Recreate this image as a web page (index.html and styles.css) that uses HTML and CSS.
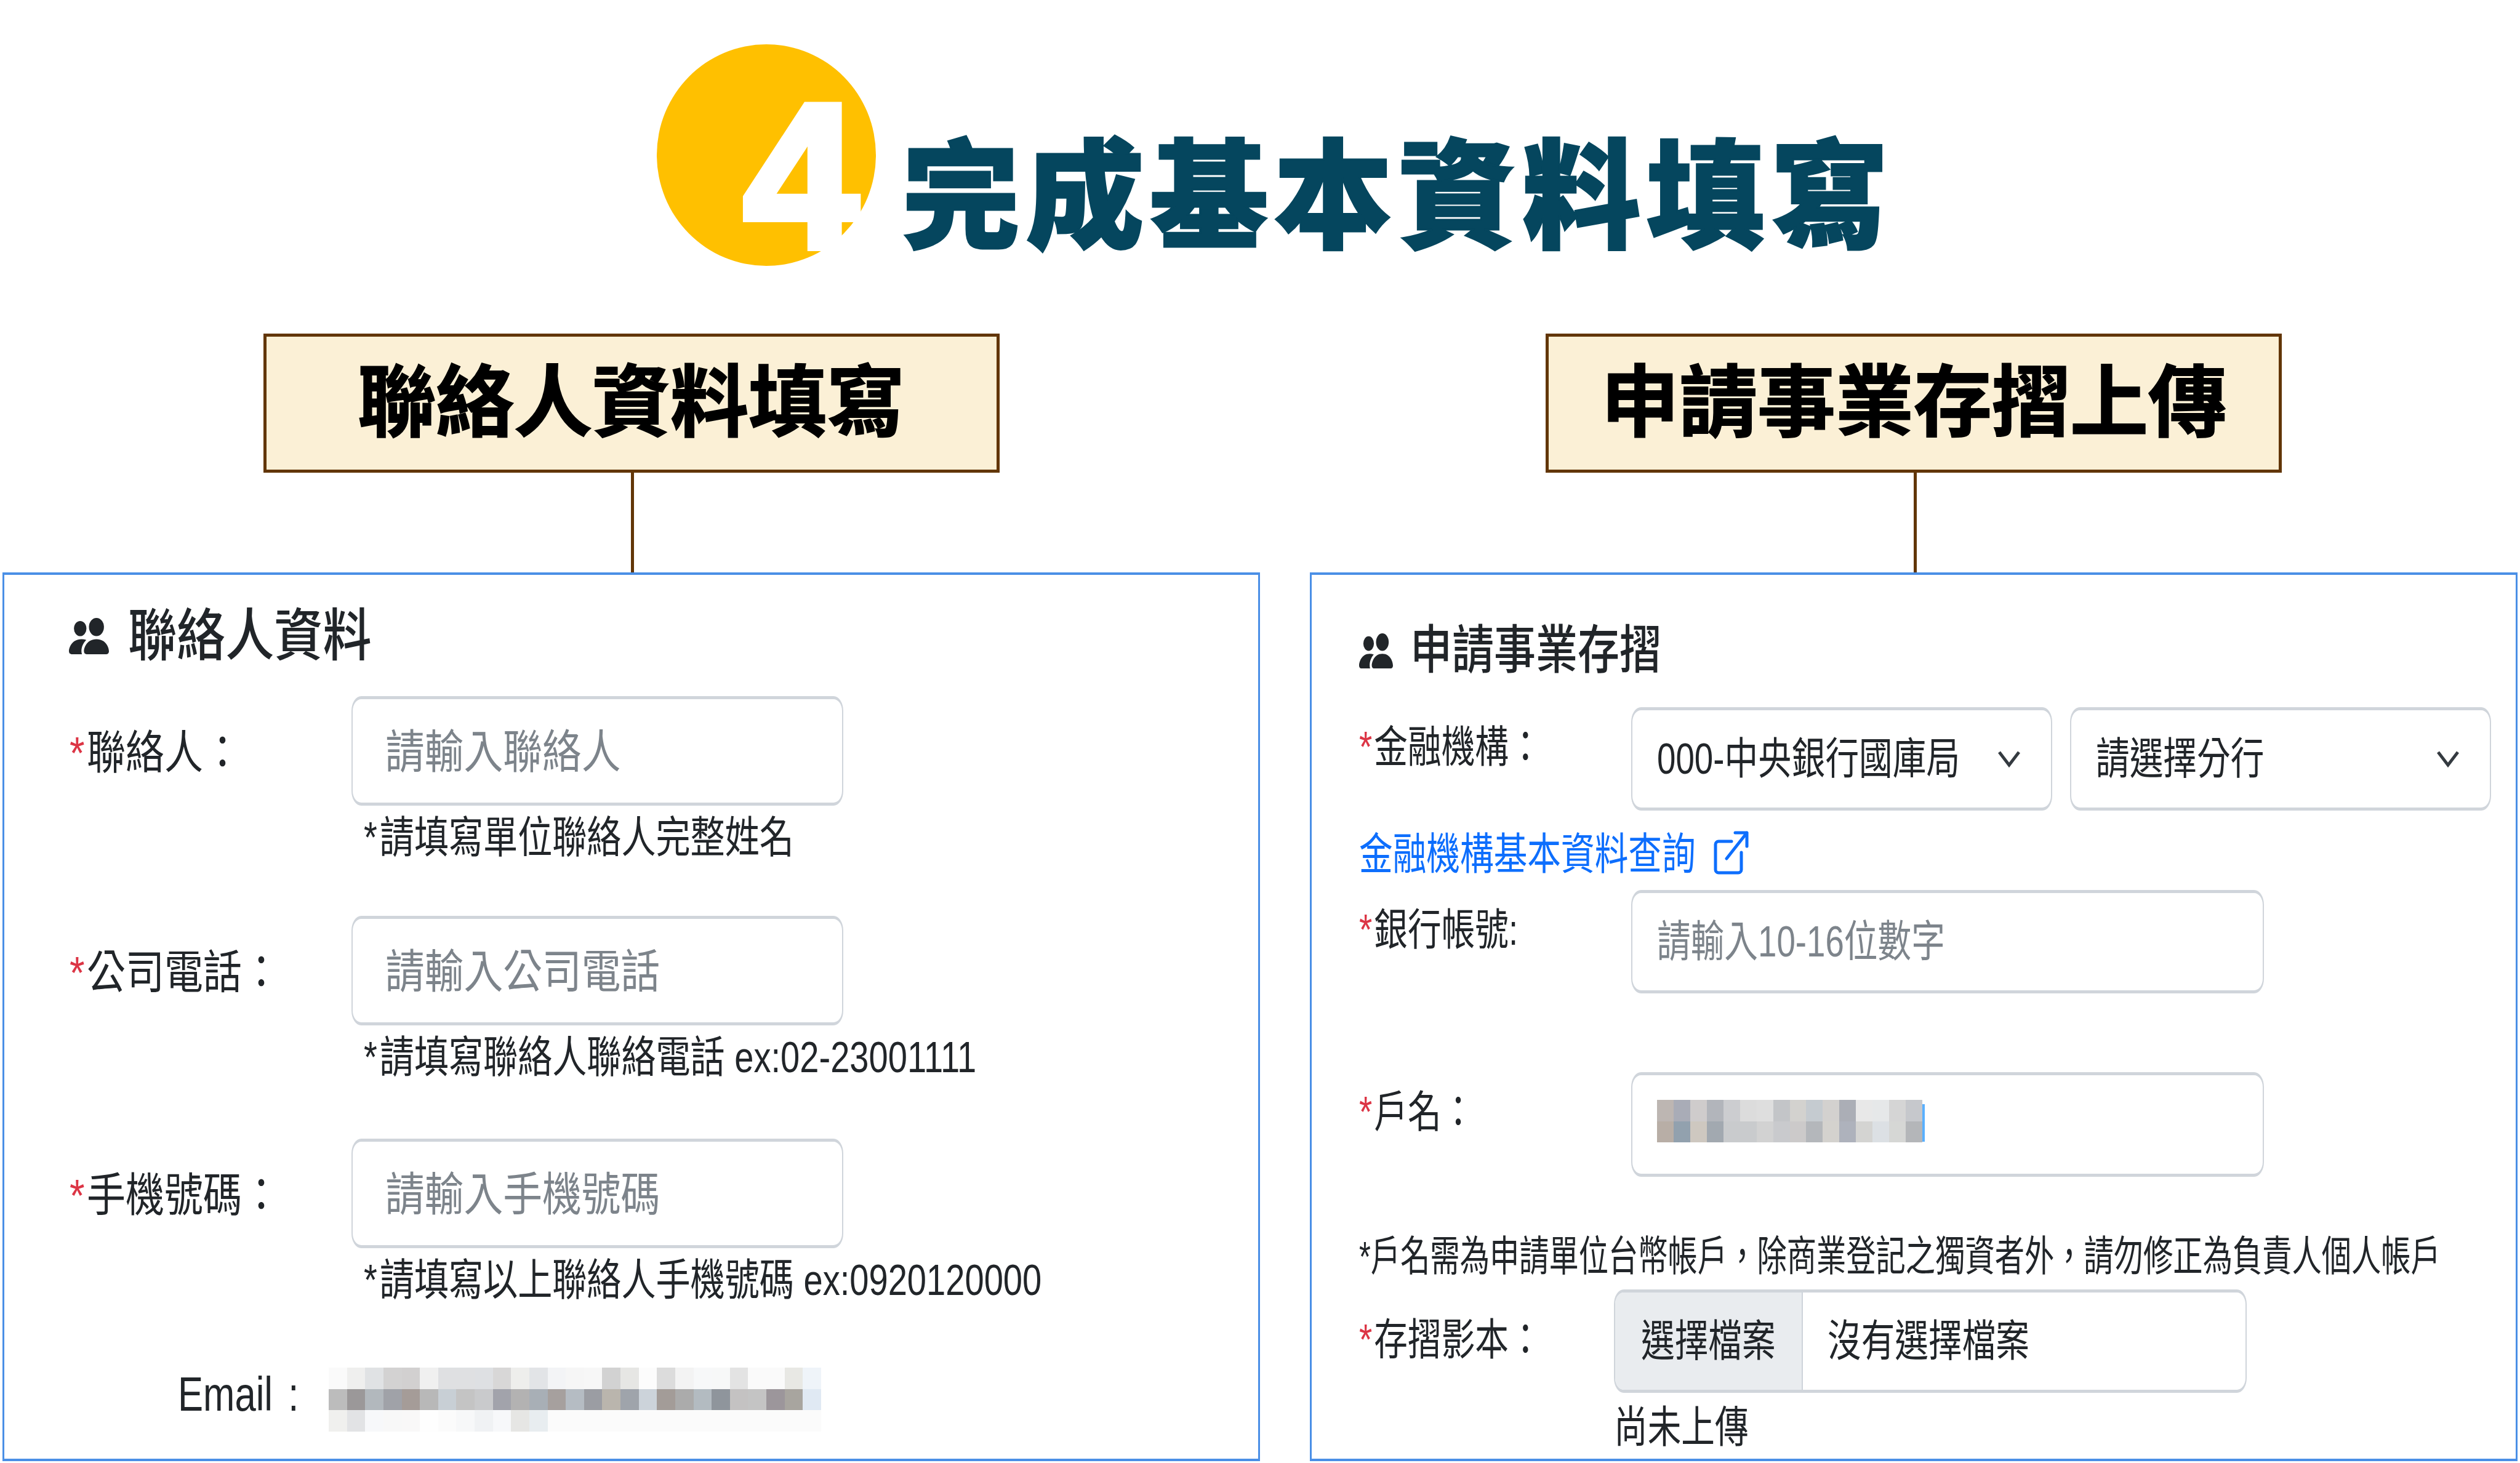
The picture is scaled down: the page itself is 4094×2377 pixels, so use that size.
FILE: index.html
```html
<!DOCTYPE html>
<html lang="zh-Hant">
<head>
<meta charset="utf-8">
<title>完成基本資料填寫</title>
<link rel="stylesheet" href="styles.css">
</head>
<body>
<main class="page">
  <header class="hero">
    <div class="step"><span class="step-num">4</span></div>
    <h1 class="hero-title">完成基本資料填寫</h1>
  </header>
  <div class="columns">
    <section class="col">
      <div class="callout"><h2>聯絡人資料填寫</h2></div>
      <div class="connector"></div>
      <div class="panel panel-left">
        <div class="panel-head">
          <svg class="icon-people-l" viewBox="0 2 16 12" preserveAspectRatio="none"><path d="M7 14s-1 0-1-1 1-4 5-4 5 3 5 4-1 1-1 1H7Zm4-6a3 3 0 1 0 0-6 3 3 0 0 0 0 6Zm-5.784 6A2.238 2.238 0 0 1 5 13c0-1.355.68-2.75 1.936-3.72A6.325 6.325 0 0 0 5 9c-4 0-5 3-5 4s1 1 1 1h4.216ZM4.5 8a2.5 2.5 0 1 0 0-5 2.5 2.5 0 0 0 0 5Z"/></svg>
          <span class="t head-l">聯絡人資料</span>
        </div>
        <div class="lrow lrow-1">
          <div class="llabel"><span class="t l-lab"><span class="req">*</span>聯絡人：</span></div>
          <div>
            <div class="field lfield"><span class="t l-ph">請輸入聯絡人</span></div>
            <div class="help"><span class="t l-help"><span class="star">*</span>請填寫單位聯絡人完整姓名</span></div>
          </div>
        </div>
        <div class="lrow lrow-2">
          <div class="llabel"><span class="t l-lab"><span class="req">*</span>公司電話：</span></div>
          <div>
            <div class="field lfield"><span class="t l-ph">請輸入公司電話</span></div>
            <div class="help"><span class="t l-help"><span class="star">*</span>請填寫聯絡人聯絡電話 ex:02-23001111</span></div>
          </div>
        </div>
        <div class="lrow lrow-3">
          <div class="llabel"><span class="t l-lab"><span class="req">*</span>手機號碼：</span></div>
          <div>
            <div class="field lfield"><span class="t l-ph">請輸入手機號碼</span></div>
            <div class="help"><span class="t l-help"><span class="star">*</span>請填寫以上聯絡人手機號碼 ex:0920120000</span></div>
          </div>
        </div>
        <div class="email-row">
          <div class="email-label"><span class="t l-email">Email :</span></div>
          <svg class="mosaic-email" viewBox="0 0 27 3" preserveAspectRatio="none" shape-rendering="crispEdges">
            <rect x="0" y="0" width="1" height="1" fill="#fafafa"/><rect x="1" y="0" width="1" height="1" fill="#efefee"/><rect x="2" y="0" width="1" height="1" fill="#e0e2e4"/><rect x="3" y="0" width="1" height="1" fill="#d3d2d2"/><rect x="4" y="0" width="1" height="1" fill="#d2d0d0"/><rect x="5" y="0" width="1" height="1" fill="#f0f0f0"/><rect x="6" y="0" width="1" height="1" fill="#dfe0e2"/><rect x="7" y="0" width="1" height="1" fill="#dfe0e2"/><rect x="8" y="0" width="1" height="1" fill="#dee0e3"/><rect x="9" y="0" width="1" height="1" fill="#d8d7d7"/><rect x="10" y="0" width="1" height="1" fill="#eeeeec"/><rect x="11" y="0" width="1" height="1" fill="#e2e4e7"/><rect x="12" y="0" width="1" height="1" fill="#f3f4f6"/><rect x="13" y="0" width="1" height="1" fill="#f6f6f6"/><rect x="14" y="0" width="1" height="1" fill="#f7f7f7"/><rect x="15" y="0" width="1" height="1" fill="#d2d2d2"/><rect x="16" y="0" width="1" height="1" fill="#e6e6e4"/><rect x="17" y="0" width="1" height="1" fill="#fcfcfc"/><rect x="18" y="0" width="1" height="1" fill="#dcdcdc"/><rect x="19" y="0" width="1" height="1" fill="#f3f3f3"/><rect x="20" y="0" width="1" height="1" fill="#f7f8f9"/><rect x="21" y="0" width="1" height="1" fill="#f7f8f8"/><rect x="22" y="0" width="1" height="1" fill="#e3e3e3"/><rect x="23" y="0" width="1" height="1" fill="#fafafa"/><rect x="24" y="0" width="1" height="1" fill="#fafafa"/><rect x="25" y="0" width="1" height="1" fill="#e8e8e4"/><rect x="26" y="0" width="1" height="1" fill="#eff4f9"/>
            <rect x="0" y="1" width="1" height="1" fill="#bcbcbc"/><rect x="1" y="1" width="1" height="1" fill="#9b9899"/><rect x="2" y="1" width="1" height="1" fill="#b2b8bd"/><rect x="3" y="1" width="1" height="1" fill="#a0a2a8"/><rect x="4" y="1" width="1" height="1" fill="#a59c98"/><rect x="5" y="1" width="1" height="1" fill="#b8b8b8"/><rect x="6" y="1" width="1" height="1" fill="#c8cfd5"/><rect x="7" y="1" width="1" height="1" fill="#c4c4c4"/><rect x="8" y="1" width="1" height="1" fill="#c9cacc"/><rect x="9" y="1" width="1" height="1" fill="#a2a3ab"/><rect x="10" y="1" width="1" height="1" fill="#b3b2b2"/><rect x="11" y="1" width="1" height="1" fill="#a8afb6"/><rect x="12" y="1" width="1" height="1" fill="#a6a09e"/><rect x="13" y="1" width="1" height="1" fill="#b5bcc3"/><rect x="14" y="1" width="1" height="1" fill="#9b9da3"/><rect x="15" y="1" width="1" height="1" fill="#bab5ad"/><rect x="16" y="1" width="1" height="1" fill="#9fa4ab"/><rect x="17" y="1" width="1" height="1" fill="#ccd3da"/><rect x="18" y="1" width="1" height="1" fill="#a39c98"/><rect x="19" y="1" width="1" height="1" fill="#ababab"/><rect x="20" y="1" width="1" height="1" fill="#b3bbc1"/><rect x="21" y="1" width="1" height="1" fill="#8f959c"/><rect x="22" y="1" width="1" height="1" fill="#c4c2c2"/><rect x="23" y="1" width="1" height="1" fill="#c4c4c4"/><rect x="24" y="1" width="1" height="1" fill="#9c969b"/><rect x="25" y="1" width="1" height="1" fill="#a8a59f"/><rect x="26" y="1" width="1" height="1" fill="#e0e9f3"/>
            <rect x="0" y="2" width="1" height="1" fill="#f0f0ee"/><rect x="1" y="2" width="1" height="1" fill="#e2e3e5"/><rect x="2" y="2" width="1" height="1" fill="#f7f8fa"/><rect x="3" y="2" width="1" height="1" fill="#f8f8f8"/><rect x="4" y="2" width="1" height="1" fill="#f9f8f8"/><rect x="5" y="2" width="1" height="1" fill="#fefefe"/><rect x="6" y="2" width="1" height="1" fill="#fbfbfb"/><rect x="7" y="2" width="1" height="1" fill="#f7f8f9"/><rect x="8" y="2" width="1" height="1" fill="#f0f2f4"/><rect x="9" y="2" width="1" height="1" fill="#f7f8fa"/><rect x="10" y="2" width="1" height="1" fill="#e6e6e4"/><rect x="11" y="2" width="1" height="1" fill="#e8edf0"/><rect x="12" y="2" width="15" height="1" fill="#fbfbfb"/>
          </svg>
        </div>
      </div>
    </section>
    <section class="col">
      <div class="callout"><h2>申請事業存摺上傳</h2></div>
      <div class="connector"></div>
      <div class="panel panel-right">
        <div class="panel-head head-r-row">
          <svg class="icon-people-r" viewBox="0 2 16 12" preserveAspectRatio="none"><path d="M7 14s-1 0-1-1 1-4 5-4 5 3 5 4-1 1-1 1H7Zm4-6a3 3 0 1 0 0-6 3 3 0 0 0 0 6Zm-5.784 6A2.238 2.238 0 0 1 5 13c0-1.355.68-2.75 1.936-3.72A6.325 6.325 0 0 0 5 9c-4 0-5 3-5 4s1 1 1 1h4.216ZM4.5 8a2.5 2.5 0 1 0 0-5 2.5 2.5 0 0 0 0 5Z"/></svg>
          <span class="t head-r">申請事業存摺</span>
        </div>
        <div class="rrow rrow-bank">
          <div class="rlabel"><span class="t r-txt"><span class="req">*</span>金融機構：</span></div>
          <div class="selects">
            <div class="field sel"><span class="t r-txt">000-中央銀行國庫局</span><svg class="chev" viewBox="0 0 38 28"><path d="M3 3L19 24L35 3"/></svg></div>
            <div class="field sel"><span class="t r-txt">請選擇分行</span><svg class="chev" viewBox="0 0 38 28"><path d="M3 3L19 24L35 3"/></svg></div>
          </div>
        </div>
        <a class="lookup"><span class="t lookup-txt">金融機構基本資料查詢</span><svg class="icon-ext" viewBox="0 0 90 90"><path d="M43 27H22a5 5 0 0 0-5 5v41a5 5 0 0 0 5 5h32a5 5 0 0 0 5-5V45M35 55L68 13M49 13H68V35"/></svg></a>
        <div class="rrow rrow-acct">
          <div class="rlabel"><span class="t r-txt"><span class="req">*</span>銀行帳號:</span></div>
          <div class="field rfield"><span class="t r-ph">請輸入10-16位數字</span></div>
        </div>
        <div class="rrow rrow-name">
          <div class="rlabel"><span class="t r-txt"><span class="req">*</span>戶名：</span></div>
          <div class="field rfield name-field">
            <svg class="mosaic-name" viewBox="0 0 16 2" preserveAspectRatio="none" shape-rendering="crispEdges">
              <rect x="0" y="0" width="1" height="1" fill="#bdb6b2"/><rect x="1" y="0" width="1" height="1" fill="#a9acb7"/><rect x="2" y="0" width="1" height="1" fill="#cfcccc"/><rect x="3" y="0" width="1" height="1" fill="#b2b5bb"/><rect x="4" y="0" width="1" height="1" fill="#cccdd0"/><rect x="5" y="0" width="1" height="1" fill="#dcdcdc"/><rect x="6" y="0" width="1" height="1" fill="#dedede"/><rect x="7" y="0" width="1" height="1" fill="#c3c5c8"/><rect x="8" y="0" width="1" height="1" fill="#d3d2cf"/><rect x="9" y="0" width="1" height="1" fill="#c5cbd0"/><rect x="10" y="0" width="1" height="1" fill="#d3d1cf"/><rect x="11" y="0" width="1" height="1" fill="#abaeb6"/><rect x="12" y="0" width="1" height="1" fill="#e8e8e8"/><rect x="13" y="0" width="1" height="1" fill="#e6e8e9"/><rect x="14" y="0" width="1" height="1" fill="#d5d5d5"/><rect x="15" y="0" width="1" height="1" fill="#c6c8cc"/>
              <rect x="0" y="1" width="1" height="1" fill="#b8aea6"/><rect x="1" y="1" width="1" height="1" fill="#92a1ae"/><rect x="2" y="1" width="1" height="1" fill="#cec8c0"/><rect x="3" y="1" width="1" height="1" fill="#a2a9b0"/><rect x="4" y="1" width="1" height="1" fill="#c9cbcd"/><rect x="5" y="1" width="1" height="1" fill="#c9cbcd"/><rect x="6" y="1" width="1" height="1" fill="#d2d2d2"/><rect x="7" y="1" width="1" height="1" fill="#c9cacd"/><rect x="8" y="1" width="1" height="1" fill="#cccaca"/><rect x="9" y="1" width="1" height="1" fill="#b4b7bb"/><rect x="10" y="1" width="1" height="1" fill="#d4d2ce"/><rect x="11" y="1" width="1" height="1" fill="#aeb2bc"/><rect x="12" y="1" width="1" height="1" fill="#d4d4d2"/><rect x="13" y="1" width="1" height="1" fill="#dce0e4"/><rect x="14" y="1" width="1" height="1" fill="#d6d7d5"/><rect x="15" y="1" width="1" height="1" fill="#b4b6b9"/>
            </svg>
            <span class="caret"></span>
          </div>
        </div>
        <p class="note"><span class="t r-note">*戶名需為申請單位台幣帳戶，除商業登記之獨資者外，請勿修正為負責人個人帳戶</span></p>
        <div class="rrow rrow-file">
          <div class="rlabel file-label"><span class="t r-txt"><span class="req">*</span>存摺影本：</span></div>
          <div class="field file">
            <div class="file-btn"><span class="t r-txt">選擇檔案</span></div>
            <div class="file-name"><span class="t r-txt">沒有選擇檔案</span></div>
          </div>
        </div>
        <p class="status"><span class="t r-txt">尚未上傳</span></p>
      </div>
    </section>
  </div>
</main>
</body>
</html>
```
FILE: styles.css
```css
* { box-sizing: border-box; }
html, body { margin: 0; padding: 0; background: #fff; }
body { font-family: "Liberation Sans", "Noto Sans CJK TC", sans-serif; color: #212529; }
h1, h2, p { margin: 0; font-weight: normal; }

.page { width: 4094px; height: 2377px; overflow: hidden; display: flex; flex-direction: column; padding-top: 72px; }

.hero { display: flex; height: 360px; padding-left: 1067px; gap: 42px; flex: none; }
.step { width: 356px; height: 360px; border-radius: 50%; background: #ffc000; display: flex; align-items: center; justify-content: center; padding: 68px 0 0 112px; flex: none; }
.step-num { font-size: 335px; line-height: 1; font-weight: 700; color: #fff; -webkit-text-stroke: 12px #fff; }
.hero-title { align-self: flex-end; margin-bottom: 28px; font-family: "Noto Sans CJK TC", sans-serif; font-size: 192px; line-height: 200px; letter-spacing: 9.6px; font-weight: 900; color: #05465e; -webkit-text-stroke: 3px #05465e; white-space: nowrap; }

.columns { display: grid; grid-template-columns: 2043px 1962px; column-gap: 81px; padding-left: 4px; margin-top: 110px; height: 1829px; flex: none; }
.col { display: flex; flex-direction: column; align-items: center; height: 100%; }
.callout { width: 1196px; height: 226px; flex: none; border: 5px solid #623607; background: #fbf0d6; display: flex; align-items: center; justify-content: center; padding-bottom: 23px; }
.callout h2 { font-family: "Noto Sans CJK TC", sans-serif; font-size: 127px; line-height: 140px; font-weight: 700; color: #000; -webkit-text-stroke: 2px #000; white-space: nowrap; }
.connector { width: 5px; height: 162px; flex: none; background: #623607; margin-left: 4px; }
.panel { align-self: stretch; height: 1444px; flex: none; border: solid #4a8fe6; border-width: 4px 3px; }

.t { display: inline-block; white-space: nowrap; transform-origin: left center; }
.req { color: #dc3545; margin-right: 4px; }
.star { margin-right: 5px; }

.panel-head { display: flex; align-items: center; height: 92px; }
.panel-left { padding: 53px 0 0 105px; }
.panel-right { padding: 77px 0 0 77px; }
.icon-people-l { width: 65px; height: 59px; margin-right: 31px; fill: #212529; flex: none; }
.icon-people-r { width: 55px; height: 57px; margin-right: 28px; fill: #212529; flex: none; }
.head-l { font-size: 92px; line-height: 92px; font-weight: 500; transform: scaleX(.86); }
.head-r { font-size: 85px; line-height: 92px; font-weight: 500; transform: scaleX(.8); }

.field { border: solid #d0d5db; border-width: 5px 2px; border-radius: 16px / 24px; background: #fff; display: flex; align-items: center; }

.lrow { display: grid; grid-template-columns: 464px 799px; margin-left: -5px; }
.lrow-1 { margin-top: 52px; }
.lrow-2 { margin-top: 91px; }
.lrow-3 { margin-top: 96px; }
.llabel { height: 178px; display: flex; align-items: center; padding: 5px 0 0 6px; }
.l-lab { font-size: 75px; line-height: 72px; transform: scaleX(.84); }
.lfield { height: 178px; padding-left: 53px; }
.l-ph { font-size: 75px; line-height: 72px; color: #7d848b; transform: scaleX(.85); padding-top: 4px; }
.help { margin: 16px 0 0 20px; height: 72px; }
.l-help { font-size: 71px; line-height: 72px; transform: scaleX(.79); }

.email-row { display: grid; grid-template-columns: 245px 800px; margin: 106px 0 0 177px; height: 104px; }
.email-label { padding-top: 7px; }
.l-email { font-size: 77px; line-height: 72px; transform: scaleX(.8); word-spacing: 10px; }
.mosaic-email { width: 800px; height: 104px; display: block; }

.rrow { display: flex; align-items: flex-start; }
.rlabel { width: 442px; flex: none; padding-top: 29px; }
.r-txt { font-size: 71px; line-height: 72px; transform: scaleX(.77); }
.r-ph { font-size: 71px; line-height: 72px; color: #7d848b; transform: scaleX(.77); }
.rrow-bank { margin-top: 46px; }
.selects { display: flex; gap: 29px; }
.sel { width: 684px; height: 168px; padding: 0 49px 0 40px; }
.sel .t { flex: 1 1 0; min-width: 0; }
.chev { width: 38px; height: 28px; flex: none; fill: none; stroke: #343a40; stroke-width: 5; }

.lookup { display: flex; align-items: center; height: 72px; margin-top: 35px; color: #0d6efd; }
.lookup-txt { width: 562px; font-size: 71px; line-height: 72px; transform: scaleX(.77); }
.icon-ext { width: 90px; height: 90px; flex: none; fill: none; stroke: #0d6efd; stroke-width: 5; stroke-linecap: round; stroke-linejoin: round; margin-top: -6px; }

.rrow-acct { margin-top: 22px; }
.rrow-name { margin-top: 128px; }
.rfield { width: 1028px; height: 168px; padding-left: 40px; }
.name-field { height: 170px; align-items: flex-start; padding-top: 40px; }
.mosaic-name { width: 431px; height: 69px; display: block; flex: none; }
.caret { width: 4px; height: 61px; background: #5ab0ff; margin-top: 7px; flex: none; }

.note { margin-top: 93px; height: 72px; }
.r-note { font-size: 68px; line-height: 72px; transform: scaleX(.71); }

.rrow-file { margin-top: 18px; }
.file-label { width: 414px; padding-top: 46px; }
.file { width: 1028px; height: 168px; overflow: hidden; align-items: stretch; }
.file-btn { width: 305px; flex: none; background: #e9ecef; border-right: 2px solid #ced4da; padding-left: 42px; display: flex; align-items: center; }
.file-name { padding-left: 40px; display: flex; align-items: center; }
.status { margin: 20px 0 0 414px; height: 72px; }
```
